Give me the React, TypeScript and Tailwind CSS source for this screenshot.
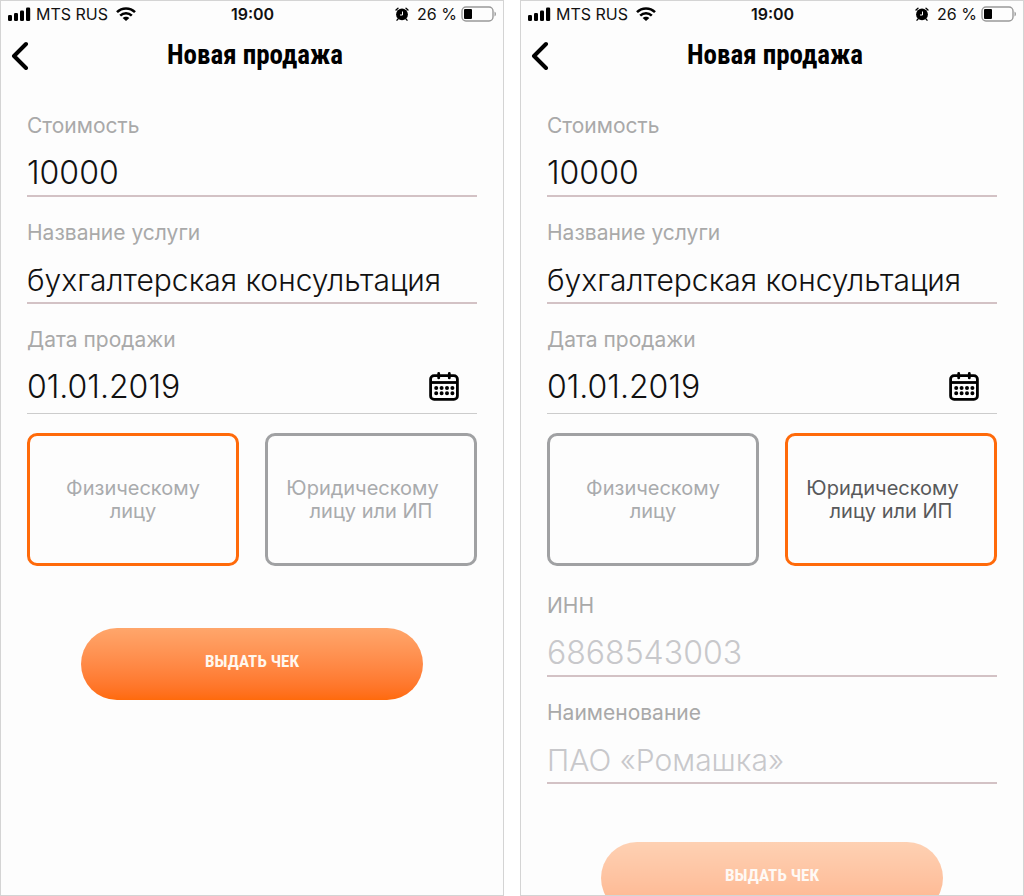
import { useId, useState } from "react";

type Buyer = "person" | "company";

function StatusBar() {
  return (
    <div className="grid h-[26px] grid-cols-[1fr_auto_1fr] items-center pr-[6px] pl-[7px] text-[16px] leading-[20px] text-[#111]">
      <div className="flex items-center">
        <svg className="mr-[5px] h-[14px] w-[23px]" viewBox="0 0 23 14" aria-hidden="true">
          <rect x="0" y="8" width="4" height="6" rx="1.3" />
          <rect x="6" y="6" width="4" height="8" rx="1.3" />
          <rect x="12" y="3.5" width="4" height="10.5" rx="1.3" />
          <rect x="18" y="0.5" width="4.2" height="13.5" rx="1.3" />
        </svg>
        <span>MTS RUS</span>
        <svg className="ml-[8px] h-[14px] w-[20px]" viewBox="0 0 20 14" fill="none" stroke="#000" strokeWidth="2.5" aria-hidden="true">
          <path d="M1 5.2C6 .1 14 .1 19 5.2" />
          <path d="M4.2 8.7c3.3-3.3 8.3-3.3 11.6 0" />
          <path d="M6.600 11c1.900-1.800 4.900-1.800 6.800 0L10 14z" fill="#000" stroke="none" />
        </svg>
      </div>
      <span className="font-semibold">19:00</span>
      <div className="flex items-center justify-end">
        <svg className="mr-[8px] h-[14px] w-[14px]" viewBox="0 0 14 14" aria-hidden="true">
          <circle cx="7" cy="7.4" r="5.9" />
          <path d="M1 3 3 1.200M13 3 11 1.200M3 12l-1 1.200M11 12l1 1.200" stroke="#000" strokeWidth="1.300" strokeLinecap="round" />
          <path d="M7.500 4.500v3.500H5" fill="none" stroke="#fff" strokeWidth="1" />
        </svg>
        <span>26 %</span>
        <svg className="ml-[4px] h-[16px] w-[36px]" viewBox="0 0 36 16" aria-hidden="true">
          <rect x="1" y="1" width="31" height="14" rx="4" fill="none" stroke="#999" strokeWidth="1.4" />
          <rect x="3" y="3" width="8" height="10" rx="1" />
          <path d="M33.5 5.500c2 1 2 4 0 5z" fill="#999" />
        </svg>
      </div>
    </div>
  );
}

function CalendarIcon() {
  return (
    <svg className="h-[29px] w-[30px]" viewBox="0 0 30 29" fill="none" stroke="#000" strokeWidth="2.8" aria-hidden="true">
      <rect x="1.600" y="3.600" width="26.800" height="23.800" rx="3.5" />
      <path d="M1.600 10.500h26.800" />
      <path d="M9.700 1.400v4.500M20.300 1.400v4.500" strokeLinecap="round" />
      <path d="M7.200 16h17M7.200 21.300h17" strokeWidth="4" strokeLinecap="round" strokeDasharray="0 5.400" />
    </svg>
  );
}

interface FieldProps {
  label: string;
  value?: string;
  placeholder?: string;
  numeric?: boolean;
}

function Field({ label, value, placeholder, numeric }: FieldProps) {
  const id = useId();
  return (
    <div className="flex flex-col">
      <label htmlFor={id} className="text-[21px] leading-[28px] text-[#a9a9a9]">{label}</label>
      <input
        id={id}
        defaultValue={value}
        placeholder={placeholder}
        inputMode={numeric ? "numeric" : "text"}
        className={`h-[57px] w-full border-b-2 border-[#d3c2c5] bg-transparent pt-[10px] font-light text-[#111] outline-none placeholder:text-[#c8c8cb] ${numeric ? "text-[32px]" : "text-[30px]"}`}
      />
    </div>
  );
}

function DateField() {
  const id = useId();
  return (
    <div className="flex flex-col">
      <label htmlFor={id} className="text-[21px] leading-[28px] text-[#a9a9a9]">Дата продажи</label>
      <div className="flex h-[60px] items-center border-b border-[#ccc] pt-[6px] pr-[18px]">
        <input id={id} defaultValue="01.01.2019" className="min-w-0 flex-1 bg-transparent text-[32px] font-light text-[#111] outline-none" />
        <button type="button" aria-label="Календарь">
          <CalendarIcon />
        </button>
      </div>
    </div>
  );
}

function SaleScreen({ initialBuyer }: { initialBuyer: Buyer }) {
  const [buyer, setBuyer] = useState<Buyer>(initialBuyer);
  const company = buyer === "company";
  const card = "h-[133px] rounded-[10px] border-[3px] text-[20px] leading-[23px] whitespace-pre";

  return (
    <section className="h-screen min-w-0 overflow-hidden border border-[#d4d4d4] bg-[#fdfdfd]">
      <StatusBar />
      <header className="grid h-[56px] grid-cols-[46px_1fr_40px] items-center">
        <button type="button" aria-label="Назад" className="pl-[9px]">
          <svg className="h-[30px] w-[20px]" viewBox="0 0 20 30" fill="none" stroke="#000" strokeWidth="4" strokeLinecap="round" strokeLinejoin="round">
            <path d="M16 5 4 17l12 12" transform="translate(0 -1)" />
          </svg>
        </button>
        <h1 className="text-center font-['Roboto_Condensed','Liberation_Sans_Narrow',Roboto,sans-serif] text-[27px] leading-[32px] font-bold text-black">
          Новая продажа
        </h1>
      </header>

      <form className="px-[26px] pt-[29px]" onSubmit={(e) => e.preventDefault()}>
        <div className="flex flex-col gap-[22px]">
          <Field label="Стоимость" value="10000" numeric />
          <Field label="Название услуги" value="бухгалтерская консультация" />
          <DateField />
        </div>

        <div className="mt-[19px] grid grid-cols-2 gap-[26px]">
          <button
            type="button"
            aria-pressed={!company}
            onClick={() => setBuyer("person")}
            className={`${card} text-[#a9abad] ${company ? "border-[#a0a1a3]" : "border-[#ff6a0a]"}`}
          >
            {"Физическому\nлицу"}
          </button>
          <button
            type="button"
            aria-pressed={company}
            onClick={() => setBuyer("company")}
            className={`${card} ${company ? "border-[#ff6a0a] text-[#58595b]" : "border-[#a0a1a3] text-[#a9abad]"}`}
          >
            {"Юридическому\u00a0\u00a0\u00a0\nлицу или ИП"}
          </button>
        </div>

        {company && (
          <div className="mt-[26px] flex flex-col gap-[22px]">
            <Field label="ИНН" placeholder="6868543003" numeric />
            <Field label="Наименование" placeholder="ПАО «Ромашка»" />
          </div>
        )}

        <div className={`px-[54px] ${company ? "pt-[58px] opacity-50" : "pt-[62px]"}`}>
          <button
            type="submit"
            className="h-[72px] w-full rounded-full bg-linear-to-b from-[#ffa66b] to-[#ff6a0a] pb-[4px] font-['Roboto_Condensed','Liberation_Sans_Narrow',Roboto,sans-serif] text-[17px] font-bold text-[#fff7ee]"
          >
            ВЫДАТЬ ЧЕК
          </button>
        </div>
      </form>
    </section>
  );
}

export default function App() {
  return (
    <main className="grid min-h-screen grid-cols-2 gap-[16px] bg-white font-[Inter,'Liberation_Sans',sans-serif]">
      <SaleScreen initialBuyer="person" />
      <SaleScreen initialBuyer="company" />
    </main>
  );
}
